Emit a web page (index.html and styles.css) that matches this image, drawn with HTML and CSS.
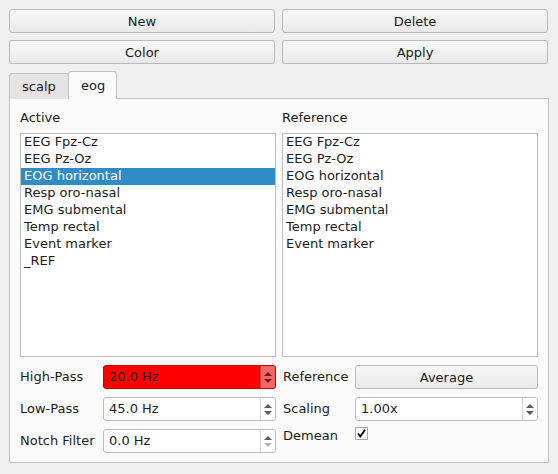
FILE: index.html
```html
<!DOCTYPE html>
<html>
<head>
<meta charset="utf-8">
<link rel="stylesheet" href="styles.css">
</head>
<body>
<div class="window">
  <div class="buttons">
    <button class="btn">New</button>
    <button class="btn">Delete</button>
    <button class="btn">Color</button>
    <button class="btn">Apply</button>
  </div>
  <div class="tabbar">
    <div class="tab">scalp</div>
    <div class="tab active">eog</div>
  </div>
  <div class="panel">
    <div class="cols">
      <div class="col">
        <div class="label">Active</div>
        <ul class="list">
          <li>EEG Fpz-Cz</li>
          <li>EEG Pz-Oz</li>
          <li class="sel">EOG horizontal</li>
          <li>Resp oro-nasal</li>
          <li>EMG submental</li>
          <li>Temp rectal</li>
          <li>Event marker</li>
          <li>_REF</li>
        </ul>
        <div class="form left">
          <span class="flabel">High-Pass</span>
          <div class="spin red"><span class="val">20.0 Hz</span><span class="arrows"><i class="up"></i><i class="down"></i></span></div>
          <span class="flabel">Low-Pass</span>
          <div class="spin"><span class="val">45.0 Hz</span><span class="arrows"><i class="up"></i><i class="down"></i></span></div>
          <span class="flabel">Notch Filter</span>
          <div class="spin"><span class="val">0.0 Hz</span><span class="arrows"><i class="up"></i><i class="down dis"></i></span></div>
        </div>
      </div>
      <div class="col">
        <div class="label">Reference</div>
        <ul class="list">
          <li>EEG Fpz-Cz</li>
          <li>EEG Pz-Oz</li>
          <li>EOG horizontal</li>
          <li>Resp oro-nasal</li>
          <li>EMG submental</li>
          <li>Temp rectal</li>
          <li>Event marker</li>
        </ul>
        <div class="form right">
          <span class="flabel">Reference</span>
          <button class="btn">Average</button>
          <span class="flabel">Scaling</span>
          <div class="spin"><span class="val">1.00x</span><span class="arrows"><i class="up"></i><i class="down"></i></span></div>
          <span class="flabel small">Demean</span>
          <div class="checkrow"><span class="check"><svg width="11" height="11" viewBox="0 0 11 11"><path d="M2 5.5 L4.3 8.5 L9 1.8" fill="none" stroke="#000" stroke-width="1.8"/></svg></span></div>
        </div>
      </div>
    </div>
  </div>
</div>
</body>
</html>
```
FILE: styles.css
```css
* { box-sizing: border-box; }
html, body { margin: 0; padding: 0; background: #efefef; }
body {
  font-family: "DejaVu Sans", sans-serif;
  font-size: 13px;
  color: #1b1b1b;
  width: 558px;
  height: 474px;
  overflow: hidden;
}
.window { padding: 9px 9px 0 9px; }
.buttons {
  display: grid;
  grid-template-columns: 266px 266px;
  column-gap: 7px;
  row-gap: 7px;
}
.btn {
  font-family: inherit;
  font-size: 13px;
  color: #1b1b1b;
  height: 24px;
  padding: 0;
  border: 1px solid #b9b9b9;
  border-radius: 3px;
  background: linear-gradient(#f8f8f8, #e9e9e9);
}
.tabbar {
  display: flex;
  margin-top: 7px;
  height: 28px;
  align-items: flex-end;
  position: relative;
  z-index: 1;
}
.tab {
  height: 26px;
  padding: 0 12px 0 12px;
  border: 1px solid #c2c2c2;
  border-bottom: none;
  border-radius: 3px 3px 0 0;
  background: #e4e4e4;
  line-height: 26px;
  width: 60px;
}
.tab.active {
  height: 28px;
  width: 49px;
  background: #fafafa;
  border-left: 1px solid #c2c2c2;
  margin-left: -1px;
  line-height: 27px;
  padding-left: 12px;
}
.panel {
  margin-top: -1px;
  width: 540px;
  height: 365px;
  border: 1px solid #c2c2c2;
  background: #fafafa;
  padding: 10px 10px 0 10px;
}
.cols {
  display: grid;
  grid-template-columns: 256px 256px;
  column-gap: 6px;
}
.col { display: flex; flex-direction: column; }
.label { height: 17px; line-height: 17px; padding-left: 0; }
.list {
  margin: 7px 0 0 0;
  padding: 0;
  list-style: none;
  height: 224px;
  border: 1px solid #bdbdbd;
  background: #fff;
}
.list li {
  height: 17px;
  line-height: 16px;
  padding-left: 3px;
  white-space: nowrap;
}
.list li.sel { background: #308cc6; color: #fff; }
.form {
  margin-top: 8px;
  display: grid;
  row-gap: 8px;
  align-items: center;
}
.form.left { grid-template-columns: 83px 173px; }
.form.right { grid-template-columns: 73px 183px; }
.form.right .flabel { padding-left: 1px; }
.flabel { height: 24px; line-height: 24px; white-space: nowrap; }
.flabel.small { height: 16px; line-height: 16px; align-self: start; margin-top: -1px; }
.spin {
  height: 24px;
  display: flex;
  border: 1px solid #bcbcbc;
  border-radius: 3px;
  background: #fff;
  overflow: hidden;
}
.spin .val { flex: 1; line-height: 22px; padding-left: 5px; }
.spin .arrows {
  width: 15px;
  border-left: 1px solid #d4d4d4;
  display: flex;
  flex-direction: column;
  align-items: center;
  justify-content: center;
  gap: 3px;
  background: #fdfdfd;
}
.arrows i { display: block; width: 0; height: 0; border-left: 4px solid transparent; border-right: 4px solid transparent; }
.arrows i.up { border-bottom: 4px solid #5a5a5a; }
.arrows i.down { border-top: 4px solid #5a5a5a; }
.arrows i.down.dis { border-top-color: #b4b4b4; }
.spin.red { background: #ff0000; border-color: #c40000; }
.spin.red .arrows { background: #f46666; border-left-color: #c84040; }
.spin.red .arrows i.up { border-bottom-color: #6a2020; }
.spin.red .arrows i.down { border-top-color: #6a2020; }
.checkrow { align-self: start; margin-top: -2px; display: flex; }
.check {
  width: 13px;
  height: 13px;
  border: 1px solid #a8a8a8;
  background: #fff;
  display: flex;
  align-items: center;
  justify-content: center;
}
.check svg { display: block; }
```
